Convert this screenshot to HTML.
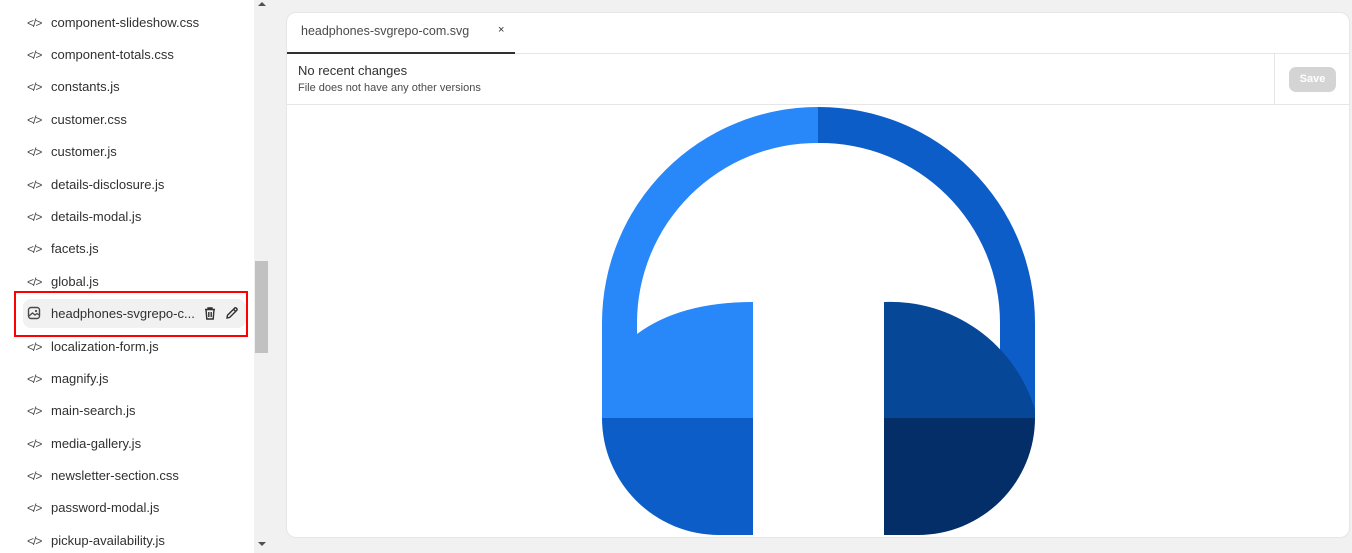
<!DOCTYPE html><html><head><style>
body{margin:0;width:1352px;height:553px;background:#f1f1f1;font-family:"Liberation Sans",sans-serif;position:relative;overflow:hidden}
.side{position:absolute;left:0;top:0;width:254px;height:553px;background:#fff}
.it{position:absolute;left:27px;font-size:13px;color:#303030;height:20px;line-height:20px;white-space:nowrap;margin-top:1px}
.it .ic{display:inline-block;width:16px;font-size:12px;color:#4a4a4a;letter-spacing:-1px;margin-right:8px}
.sb{position:absolute;left:254px;top:0;width:15px;height:553px;background:#f1f1f1}
.thumb{position:absolute;left:255px;top:261px;width:13px;height:92px;background:#c1c1c1}
.panel{position:absolute;left:286px;top:12px;width:1064px;height:526px;background:#fff;border-radius:10px;border:1px solid #e6e6e6;box-sizing:border-box;overflow:hidden}
</style></head><body>
<div class="side">
<div class="it" style="top:12px"><span class="ic">&lt;/&gt;</span>component-slideshow.css</div>
<div class="it" style="top:44px"><span class="ic">&lt;/&gt;</span>component-totals.css</div>
<div class="it" style="top:76px"><span class="ic">&lt;/&gt;</span>constants.js</div>
<div class="it" style="top:109px"><span class="ic">&lt;/&gt;</span>customer.css</div>
<div class="it" style="top:141px"><span class="ic">&lt;/&gt;</span>customer.js</div>
<div class="it" style="top:174px"><span class="ic">&lt;/&gt;</span>details-disclosure.js</div>
<div class="it" style="top:206px"><span class="ic">&lt;/&gt;</span>details-modal.js</div>
<div class="it" style="top:238px"><span class="ic">&lt;/&gt;</span>facets.js</div>
<div class="it" style="top:271px"><span class="ic">&lt;/&gt;</span>global.js</div>
<div style="position:absolute;left:14px;top:291px;width:234px;height:46px;border:2px solid #f00;box-sizing:border-box"></div>
<div style="position:absolute;left:23px;top:299px;width:223px;height:29px;background:#f1f1f1;border-radius:8px"></div>
<div class="it" style="top:303px"><span class="ic"><svg width="14" height="14" viewBox="0 0 14 14" style="vertical-align:-2px"><rect x="1.5" y="1.5" width="11" height="11" rx="2.5" fill="none" stroke="#4a4a4a" stroke-width="1.4"/><path d="M2 10 L5.5 7 L8 9 L10 7.5 L12 9" fill="none" stroke="#4a4a4a" stroke-width="1.3"/><circle cx="9" cy="5" r="1.1" fill="#4a4a4a"/></svg></span>headphones-svgrepo-c...</div>
<svg style="position:absolute;left:203px;top:306px" width="14" height="15" viewBox="0 0 14 15"><path d="M2 3.5H12M5 3.5V2H9V3.5M3 3.5L3.8 13H10.2L11 3.5M5.8 6V11M8.2 6V11" fill="none" stroke="#303030" stroke-width="1.4"/></svg>
<svg style="position:absolute;left:225px;top:306px" width="14" height="14" viewBox="0 0 14 14"><path d="M2 12L2.5 9.2L9.5 2.2Q10.5 1.3 11.6 2.4Q12.6 3.5 11.7 4.4L4.7 11.4Z M8.5 3.3L10.6 5.4" fill="none" stroke="#303030" stroke-width="1.4"/></svg>
<div class="it" style="top:336px"><span class="ic">&lt;/&gt;</span>localization-form.js</div>
<div class="it" style="top:368px"><span class="ic">&lt;/&gt;</span>magnify.js</div>
<div class="it" style="top:400px"><span class="ic">&lt;/&gt;</span>main-search.js</div>
<div class="it" style="top:433px"><span class="ic">&lt;/&gt;</span>media-gallery.js</div>
<div class="it" style="top:465px"><span class="ic">&lt;/&gt;</span>newsletter-section.css</div>
<div class="it" style="top:497px"><span class="ic">&lt;/&gt;</span>password-modal.js</div>
<div class="it" style="top:530px"><span class="ic">&lt;/&gt;</span>pickup-availability.js</div>
</div>
<div class="sb"></div><div class="thumb"></div>
<div style="position:absolute;left:258px;top:2px;width:0;height:0;border-left:4px solid transparent;border-right:4px solid transparent;border-bottom:4px solid #505050"></div>
<div style="position:absolute;left:258px;top:542px;width:0;height:0;border-left:4px solid transparent;border-right:4px solid transparent;border-top:4px solid #505050"></div>
<div class="panel">
<div style="position:absolute;left:0;top:40px;width:100%;height:1px;background:#e6e6e6"></div>
<div style="position:absolute;left:0;top:39px;width:228px;height:2px;background:#303030"></div>
<div style="position:absolute;left:14px;top:11px;font-size:12.5px;color:#4a4a4a">headphones-svgrepo-com.svg</div>
<div style="position:absolute;left:211px;top:11px;font-size:11px;color:#303030">×</div>
<div style="position:absolute;left:11px;top:50px;font-size:13px;color:#303030">No recent changes</div>
<div style="position:absolute;left:11px;top:69px;font-size:11px;color:#4a4a4a">File does not have any other versions</div>
<div style="position:absolute;left:987px;top:40px;width:1px;height:52px;background:#e6e6e6"></div>
<div style="position:absolute;left:0;top:91px;width:100%;height:1px;background:#e6e6e6"></div>
<div style="position:absolute;left:1002px;top:54px;width:47px;height:25px;background:#d4d4d4;border-radius:7px;color:#fff;font-size:11px;font-weight:bold;text-align:center;line-height:25px">Save</div>
</div>
<svg style="position:absolute;left:0;top:0" width="1352" height="553">
<clipPath id="c"><rect x="287" y="104" width="1062" height="433"/></clipPath>
<g clip-path="url(#c)">
<path d="M602 418V323A216 216 0 0 1 818 107V143A180 180 0 0 0 637 323V418Z" fill="#2888f9"/>
<path d="M1035 418V323A216 216 0 0 0 818 107V143A180 180 0 0 1 1000 323V418Z" fill="#0d5dc8"/>
<path d="M602 418V350L637 334Q680 302 753 302V418Z" fill="#2888f9"/>
<path d="M884 418V302A151 151 0 0 1 1035 410V418Z" fill="#064797"/>
<path d="M602 418H753V535H719A117 117 0 0 1 602 418Z" fill="#0d5dc8"/>
<path d="M884 418H1035A117 117 0 0 1 918 535H884Z" fill="#032e68"/>
</g>
</svg>
</body></html>
